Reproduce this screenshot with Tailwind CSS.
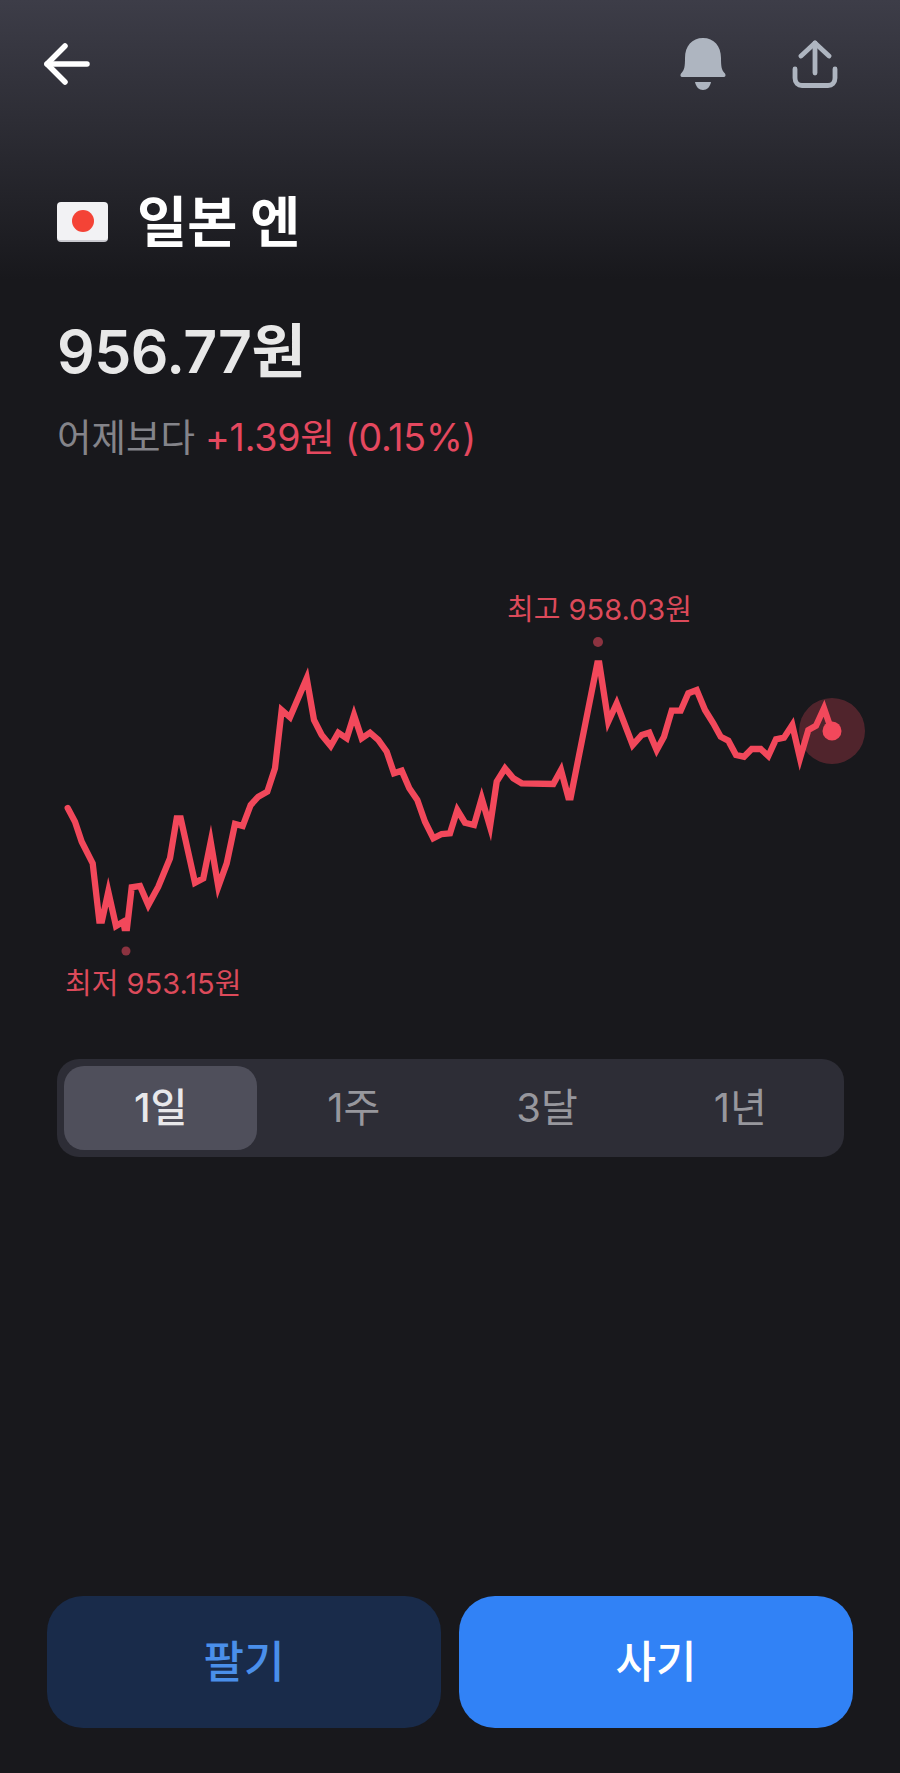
<!DOCTYPE html>
<html lang="ko">
<head>
  <meta charset="UTF-8">
  <meta name="viewport" content="width=device-width, initial-scale=1.0">
  <title>일본 엔</title>
  <script src="https://cdn.jsdelivr.net/npm/@tailwindcss/browser@4"></script>
</head>
<body class="bg-[#18181c]">
  <div class="w-[900px] h-[1773px] flex flex-col overflow-hidden font-['Inter','Noto_Sans_CJK_KR',sans-serif] bg-[linear-gradient(to_bottom,#3d3d48_0px,#18181c_280px)]">
    <!-- Top bar -->
    <div class="flex items-center justify-between h-[52px] mt-[38px] pl-[44px] pr-[62px]">
      <svg class="w-[46px] h-[42px]" viewBox="0 0 46 42" fill="none" stroke="#ffffff" stroke-width="5.500" stroke-linecap="round" stroke-linejoin="round">
        <path d="M21 3 L3 21 L21 39"/>
        <path d="M3 21 H43"/>
      </svg>
      <div class="flex items-center gap-[66px]">
        <svg class="w-[46px] h-[52px]" viewBox="0 0 46 52" fill="#aeb5c0">
          <path d="M23 0 C12 0 5 8 5 20 C5 28 4.500 32 1.500 35 C0 36.500 0 39 2.500 39 H43.500 C46 39 46 36.500 44.500 35 C41.500 32 41 28 41 20 C41 8 34 0 23 0 Z"/>
          <path d="M15 44 H31 C30 49 27 52 23 52 C19 52 16 49 15 44 Z"/>
        </svg>
        <svg class="w-[46px] h-[48px]" viewBox="0 0 46 48" fill="none" stroke="#aeb5c0" stroke-width="4.800" stroke-linecap="round" stroke-linejoin="round">
          <path d="M23 3 V33"/>
          <path d="M9 16 L23 3 L37 16"/>
          <path d="M3 29 V38 C3 43 6 45.500 10 45.500 H36 C40 45.500 43 43 43 38 V29"/>
        </svg>
      </div>
    </div>

    <!-- Title -->
    <div class="flex items-center gap-[29px] h-[60px] mt-[102px] pl-[57px]">
      <div class="w-[51px] h-[40px] flex items-center justify-center rounded-[4px] bg-[#f2f2f4] border-b-2 border-[#c9c9cf]">
        <div class="w-[22px] h-[22px] rounded-full bg-[#f44336]"></div>
      </div>
      <h1 class="text-[54.500px] leading-[60px] font-bold text-white">일본 엔</h1>
    </div>

    <!-- Price -->
    <div class="h-[60px] mt-[70px] pl-[57px] text-[59px] leading-[60px] font-semibold tracking-[-0.5px] text-[#e8e8e8]">956.77원</div>
    <div class="flex gap-[10px] h-[40px] mt-[36px] pl-[57px] text-[37.500px] leading-[40px]">
      <span class="text-[#84848a]">어제보다</span>
      <span class="tracking-[-0.2px] text-[#e5485f]">+1.39원 (0.15%)</span>
    </div>

    <!-- Chart -->
    <svg class="w-[900px] h-[460px] mt-[122px] shrink-0" viewBox="0 580 900 460" fill="none">
      <text x="507" y="620" class="text-[29px] fill-[#dc4a5a]">최고 958.03원</text>
      <circle cx="598" cy="642" r="5" fill="#8c3340"/>
      <circle cx="126" cy="951" r="4.500" fill="#8c3340"/>
      <text x="65" y="994" class="text-[29px] fill-[#dc4a5a]">최저 953.15원</text>
      <circle cx="832" cy="731" r="33" fill="#f2485b" fill-opacity="0.26"/>
      <polyline stroke="#f2485b" stroke-width="6.300" stroke-linecap="round" stroke-linejoin="miter" stroke-miterlimit="6" points="67.700,808 75,821.700 81.700,841.700 92.700,863.300 99.300,920.700 102,920.700 108.300,891.700 116,926 123.300,921.700 124.500,928 127,928 131.700,887.300 140,886 148.300,905 158.300,886.700 170,858.300 176.700,818.300 180.700,818.300 195,882.700 203.300,878.300 210.700,841.700 218.300,886.700 226.700,863.300 235,824 242.700,826 250.700,805 258.300,796.700 267.300,791.700 275,768.300 281.700,710 290,717.300 306.700,678.300 314,720 321.700,735 330.700,746 338.300,732.700 346.700,738.300 354,715 361.700,738.300 370,732.700 378.300,740 386.700,751.700 394,773.300 401.700,770.700 409.300,788.300 417.300,800 425,821.700 433.300,838.300 441.700,834 450,833.300 457.300,810 465,822.700 474,825 481.700,798.300 490,826.700 496.700,781.700 505,768.300 513.300,778.300 521.700,783.300 553.300,784 561,770 568.300,797.300 570.700,797.300 597.300,663.300 599.300,663.300 608.300,721.700 616.700,703.300 632.700,745 641.700,735 649.300,732.700 656.700,750 664,736.700 671.700,710.700 680.700,710.700 688.300,693.300 696.700,690 705,710 713.300,723.300 720.700,736.700 728.300,740.700 736,755 744,756.700 751.700,749 760.700,749 768.300,756 776,739.300 784,737.700 792.300,725 800,758.300 808.300,730 816,725.700 824,708.300 831.700,730.700"/>
      <circle cx="832" cy="731" r="9.500" fill="#f2485b"/>
    </svg>

    <!-- Period tabs -->
    <div class="grid grid-cols-4 h-[98px] mt-[19px] ml-[57px] mr-[56px] p-[7px] rounded-[22px] bg-[#2d2d36] text-[40px]">
      <div class="flex items-center justify-center rounded-[20px] bg-[#4f4f5b] font-medium text-[#e8e8ea]">1일</div>
      <div class="flex items-center justify-center text-[#97979d]">1주</div>
      <div class="flex items-center justify-center text-[#97979d]">3달</div>
      <div class="flex items-center justify-center text-[#97979d]">1년</div>
    </div>

    <!-- Buttons -->
    <div class="grid grid-cols-2 gap-[18px] h-[132px] mt-auto mb-[45px] px-[47px] text-[44px] font-medium">
      <button class="rounded-[36px] bg-[#192b4a] text-[#4a8fea]">팔기</button>
      <button class="rounded-[36px] bg-[#3182f6] text-white">사기</button>
    </div>
  </div>
</body>
</html>
